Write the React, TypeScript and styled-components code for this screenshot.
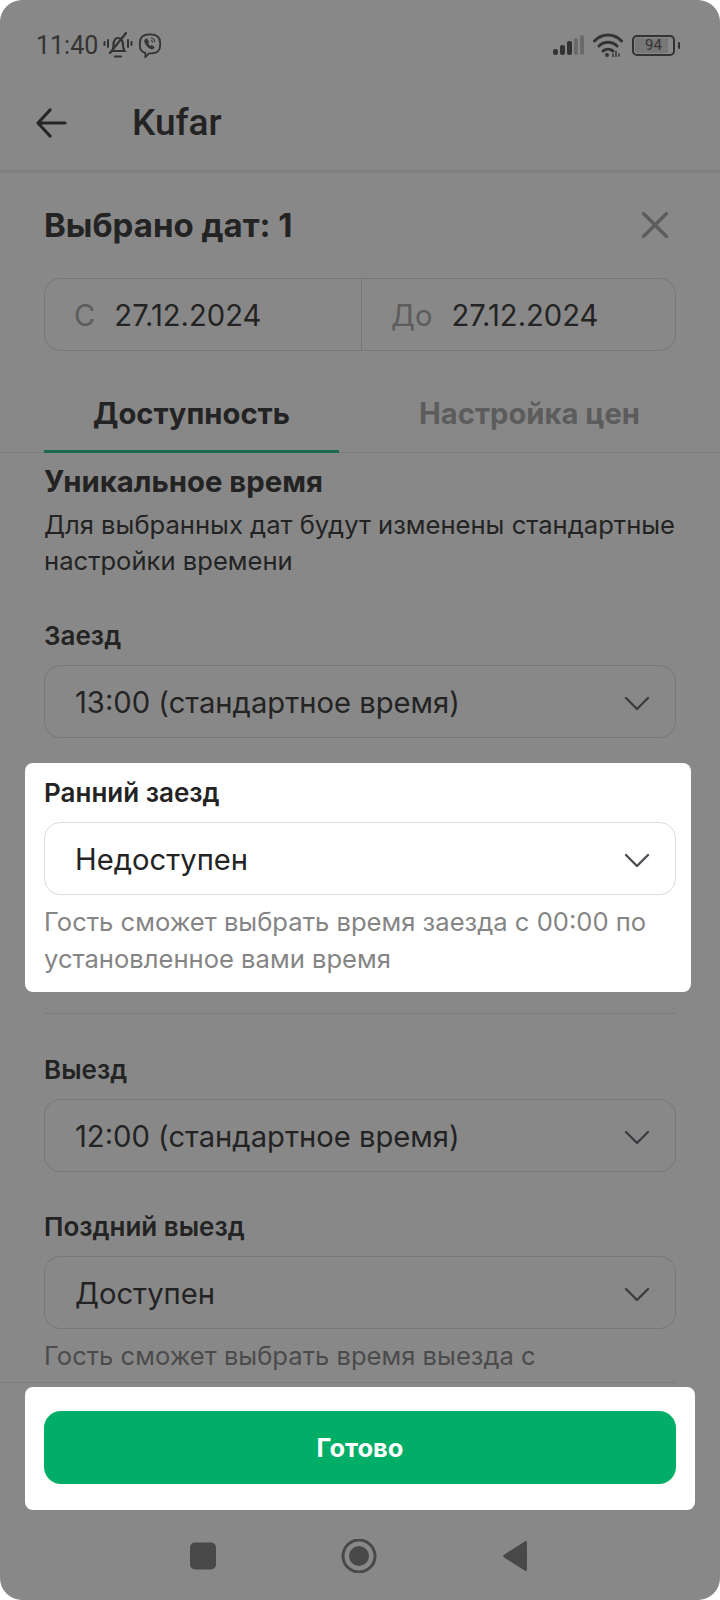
import React from 'react';
import styled, { createGlobalStyle } from 'styled-components';

const GlobalStyle = createGlobalStyle`
  html, body {
    margin: 0;
    padding: 0;
    background: #fff;
  }
`;

const Screen = styled.div`
  --text: #232323;
  --muted: #4b4b4b;
  --placeholder: #5c5c5c;
  --line: #777777;
  --chevron: #3a3d40;
  width: 720px;
  height: 1600px;
  background: #888888;
  border-radius: 22px;
  overflow: hidden;
  display: flex;
  flex-direction: column;
  font-family: Inter, "Noto Sans", sans-serif;
  color: var(--text);
`;

const StatusBar = styled.div`
  height: 90px;
  box-sizing: border-box;
  padding: 0 40px 0 36px;
  display: flex;
  align-items: center;
  justify-content: space-between;
  font-family: Roboto, sans-serif;
  font-size: 25px;
  color: #333;
`;

const StatusGroup = styled.div<{ $gap: number }>`
  display: flex;
  align-items: center;
  gap: ${p => p.$gap}px;
`;

const AppBar = styled.div`
  height: 81px;
  box-sizing: border-box;
  padding: 0 0 15px 36px;
  display: flex;
  align-items: center;
  gap: 65px;
  border-bottom: 1px solid #7c7c7c;
  box-shadow: 0 1px 2px rgba(0, 0, 0, 0.08);
`;

const AppTitle = styled.div`
  font-family: Roboto, sans-serif;
  font-size: 37px;
  font-weight: 500;
`;

const SheetHeader = styled.div`
  height: 107px;
  box-sizing: border-box;
  padding: 0 52px 0 44px;
  display: flex;
  align-items: center;
  justify-content: space-between;
`;

const SheetTitle = styled.div`
  font-size: 33px;
  font-weight: 700;
`;

const DateBox = styled.div`
  margin: 0 44px;
  height: 73px;
  box-sizing: border-box;
  border: 1px solid var(--line);
  border-radius: 16px;
  display: grid;
  grid-template-columns: 316px 1fr;
`;

const DateCell = styled.div<{ $divided?: boolean }>`
  display: flex;
  align-items: center;
  gap: 19px;
  padding: 2px 0 0 29px;
  font-size: 29.2px;
  ${p => p.$divided && 'border-left: 1px solid var(--line);'}
`;

const DateLabel = styled.span`
  color: var(--placeholder);
`;

const Tabs = styled.div`
  margin-top: 30px;
  height: 72px;
  box-sizing: border-box;
  padding-left: 44px;
  display: grid;
  grid-template-columns: 295px 1fr;
  border-bottom: 1px solid #7c7c7c;
`;

const Tab = styled.div<{ $active?: boolean }>`
  display: flex;
  align-items: center;
  justify-content: center;
  padding-bottom: 4px;
  font-size: 29.2px;
  font-weight: 700;
  color: ${p => (p.$active ? 'var(--text)' : 'var(--placeholder)')};
  border-bottom: 3px solid ${p => (p.$active ? '#1c6a4e' : 'transparent')};
  margin-bottom: -1px;
`;

const Scroll = styled.div`
  flex: 1;
  min-height: 0;
  overflow: hidden;
  padding: 11px 44px 0;
`;

const SectionTitle = styled.div`
  font-size: 29.300px;
  font-weight: 700;
  line-height: 36px;
`;

const Paragraph = styled.div`
  margin-top: 7px;
  font-size: 25.600px;
  line-height: 36px;
`;

const Field = styled.div`
  display: flex;
  flex-direction: column;
`;

const FieldLabel = styled.div`
  font-size: 26px;
  font-weight: 600;
  line-height: 30px;
`;

const Select = styled.div`
  margin-top: 14px;
  height: 73px;
  box-sizing: border-box;
  border: 1px solid var(--line);
  border-radius: 16px;
  padding: 2px 25px 0 30px;
  display: flex;
  align-items: center;
  justify-content: space-between;
  font-size: 29.2px;
`;

const Hint = styled.div`
  margin-top: 8px;
  font-size: 25.600px;
  line-height: 37px;
  color: var(--muted);
`;

const TopField = styled(Field)`
  margin-top: 42px;
`;

const NextField = styled(Field)`
  margin-top: 40px;
`;

const Highlight = styled(Field)`
  --text: #222222;
  --muted: #858585;
  --line: #dddddd;
  --chevron: #4b4f53;
  margin: 25px -15px 0 -19px;
  padding: 15px 15px 15px 19px;
  height: 229px;
  box-sizing: border-box;
  background: #fff;
  border-radius: 8px;
`;

const Divider = styled.div`
  margin-top: 21px;
  border-top: 1px solid #7c7c7c;
`;

const ExitField = styled(Field)`
  margin-top: 41px;
`;

const Footer = styled.div`
  height: 218px;
  flex-shrink: 0;
  display: flex;
  flex-direction: column;
`;

const FooterLine = styled.div`
  width: 676px;
  border-top: 1px solid #7c7c7c;
`;

const ButtonPanel = styled.div`
  margin: 4px 25px 0;
  width: 670px;
  height: 123px;
  box-sizing: border-box;
  padding: 24px 19px 0;
  background: #fff;
  border-radius: 8px;
`;

const DoneButton = styled.button`
  display: block;
  width: 632px;
  height: 73px;
  padding: 0;
  border: none;
  border-radius: 17px;
  background: #00ae68;
  color: #fff;
  font-family: Inter, sans-serif;
  font-size: 25.500px;
  font-weight: 700;
`;

const NavBar = styled.div`
  flex: 1;
  display: flex;
  align-items: center;
  justify-content: center;
  padding-top: 2px;
`;

const Chevron = () => (
  <svg width="26" height="16" viewBox="0 0 26 16" fill="none">
    <path d="M2 3 13 14 24 3" stroke="var(--chevron)" strokeWidth="2.4" strokeLinecap="round" strokeLinejoin="round" />
  </svg>
);

const BellOff = () => (
  <svg width="30" height="26" viewBox="0 0 30 26" fill="none" stroke="#333" strokeLinecap="round">
    <path d="M9 19c1.500-1.500 1.500-4 1.500-6.500C10.500 9 12.500 6 15 6s4.500 2.500 4.800 5c.3 3 .2 6 1.700 8H9Z" strokeWidth="2.200" />
    <path d="M12 24.500h6" strokeWidth="2.200" />
    <path d="M7 21 23 1" strokeWidth="2.200" />
    <path d="M5 8v7M1.500 10v3M25 8v7M28.500 10v3" strokeWidth="2" />
  </svg>
);

const Viber = () => (
  <svg width="24" height="25" viewBox="0 0 26 27" fill="none" stroke="#333">
    <path d="M13 1.500c7 0 11 2.500 11 9v3c0 6-4.500 8.500-10 8.500h-2l-4 4v-4.500c-4-1-6-3.500-6-8v-3c0-6.500 4-9 11-9Z" strokeWidth="2" />
    <path d="M8.500 6.500c-1.500 1-1.500 2.500-.5 4.500 1.500 3 3.500 5 6 6 1.500.5 3 0 3.500-1.500l-2.500-2-1.500 1c-1.500-.8-2.500-2-3-3.500l1-1.500-2-3Z" fill="#333" strokeWidth="1" />
    <path d="M14 5.500c2.500.3 4 2 4.200 4.500M14 8c1.200.2 1.900 1 2 2.200" strokeWidth="1.100" />
  </svg>
);

const Signal = () => (
  <svg width="31" height="20" viewBox="0 0 31 20" fill="#333">
    <rect x="0" y="14" width="5" height="6" rx="2" />
    <rect x="7" y="10" width="5" height="10" rx="2" />
    <rect x="14" y="6" width="5" height="14" rx="2" />
    <rect x="21" y="3" width="4" height="17" rx="2" fill="#6a6a6a" />
    <rect x="27" y="0" width="4" height="20" rx="2" fill="#6a6a6a" />
  </svg>
);

const Wifi = () => (
  <svg width="30" height="24" viewBox="0 0 30 24" fill="none" stroke="#333" strokeWidth="3" strokeLinecap="round">
    <path d="M1.500 8c7.500-8 19.500-8 27 0" />
    <path d="M6 13c5-5 13-5 18 0" />
    <path d="M10 18c3-2.500 7-2.500 10 0" />
    <circle cx="14" cy="22" r="2" fill="#333" stroke="none" />
    <path d="M20 21v2.500M23 18.500v5M26 21v2" strokeWidth="1.500" />
  </svg>
);

const BatteryBody = styled.div`
  width: 37px;
  height: 15px;
  padding: 1px;
  border: 2px solid #333;
  border-radius: 5px;
  display: flex;
  align-items: center;
  justify-content: center;
  font-family: Roboto, sans-serif;
  font-size: 15px;
  color: #333;
  background: linear-gradient(90deg, #777 0 86%, transparent 86%);
  background-clip: content-box;
`;

const BatteryTip = styled.div`
  width: 2px;
  height: 7px;
  margin-left: 3px;
  background: #333;
  border-radius: 1px;
`;

const Battery = styled.div`
  display: flex;
  align-items: center;
`;

const ArrowBack = () => (
  <svg width="31" height="30" viewBox="0 0 31 30" fill="none" stroke="#262626" strokeWidth="3.200" strokeLinecap="round" strokeLinejoin="round">
    <path d="M29 15H2.500M14 2 2 15l12 13" />
  </svg>
);

const CloseIcon = () => (
  <svg width="26" height="26" viewBox="0 0 26 26" fill="none" stroke="#5c5c5c" strokeWidth="3.200" strokeLinecap="round">
    <path d="M1.500 1.500 24.500 24.500M24.500 1.500 1.500 24.500" />
  </svg>
);

const NavIcons = () => (
  <svg width="340" height="34" viewBox="0 0 340 34" fill="#484848">
    <rect x="0" y="3.500" width="26" height="27" rx="5" />
    <circle cx="169" cy="17" r="16" fill="none" stroke="#484848" strokeWidth="3" />
    <circle cx="169" cy="17" r="10" />
    <path d="M337 3.500v27c0 1.500-1 2-2 1.200L314 18.500c-1-.8-1-2 0-2.800L335 2.300c1-.8 2-.3 2 1.200Z" />
  </svg>
);

const App: React.FC = () => {
  return (
    <>
      <GlobalStyle />
      <Screen>
        <StatusBar>
          <StatusGroup $gap={5}>
            <span>11:40</span>
            <BellOff />
            <Viber />
          </StatusGroup>
          <StatusGroup $gap={9}>
            <Signal />
            <Wifi />
            <Battery>
              <BatteryBody>94</BatteryBody>
              <BatteryTip />
            </Battery>
          </StatusGroup>
        </StatusBar>

        <AppBar>
          <ArrowBack />
          <AppTitle>Kufar</AppTitle>
        </AppBar>

        <SheetHeader>
          <SheetTitle>Выбрано дат: 1</SheetTitle>
          <CloseIcon />
        </SheetHeader>

        <DateBox>
          <DateCell>
            <DateLabel>С</DateLabel>
            <span>27.12.2024</span>
          </DateCell>
          <DateCell $divided>
            <DateLabel>До</DateLabel>
            <span>27.12.2024</span>
          </DateCell>
        </DateBox>

        <Tabs>
          <Tab $active>Доступность</Tab>
          <Tab>Настройка цен</Tab>
        </Tabs>

        <Scroll>
          <SectionTitle>Уникальное время</SectionTitle>
          <Paragraph>
            Для выбранных дат будут изменены стандартные настройки времени
          </Paragraph>

          <TopField>
            <FieldLabel>Заезд</FieldLabel>
            <Select>
              13:00 (стандартное время)
              <Chevron />
            </Select>
          </TopField>

          <Highlight>
            <FieldLabel>Ранний заезд</FieldLabel>
            <Select>
              Недоступен
              <Chevron />
            </Select>
            <Hint>Гость сможет выбрать время заезда с 00:00 по установленное вами время</Hint>
          </Highlight>

          <Divider />

          <ExitField>
            <FieldLabel>Выезд</FieldLabel>
            <Select>
              12:00 (стандартное время)
              <Chevron />
            </Select>
          </ExitField>

          <NextField>
            <FieldLabel>Поздний выезд</FieldLabel>
            <Select>
              Доступен
              <Chevron />
            </Select>
            <Hint>Гость сможет выбрать время выезда с</Hint>
          </NextField>
        </Scroll>

        <Footer>
          <FooterLine />
          <ButtonPanel>
            <DoneButton>Готово</DoneButton>
          </ButtonPanel>
          <NavBar>
            <NavIcons />
          </NavBar>
        </Footer>
      </Screen>
    </>
  );
};

export default App;
